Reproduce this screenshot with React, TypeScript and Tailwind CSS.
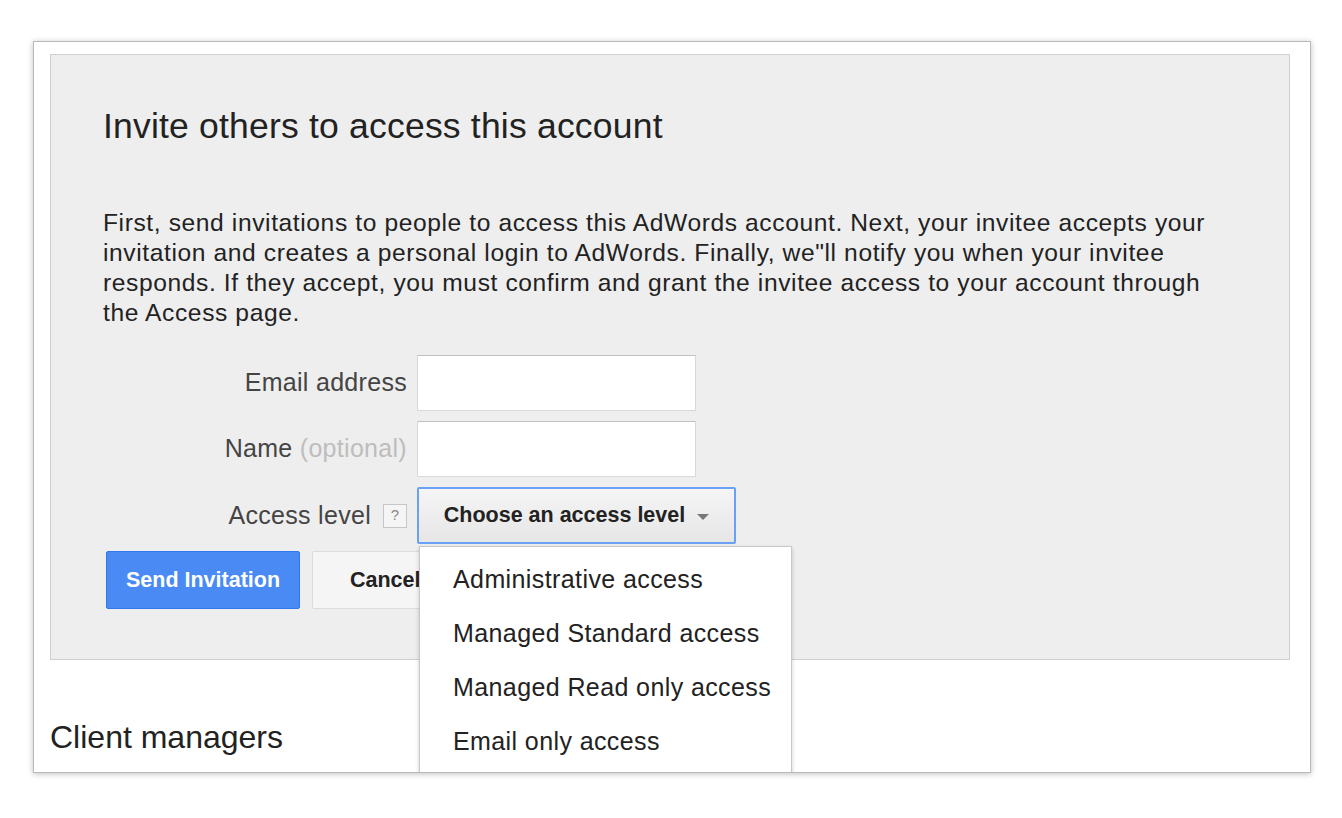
import React from 'react';

const font = { fontFamily: '"Liberation Sans", Arial, sans-serif' };

const options = [
  'Administrative access',
  'Managed Standard access',
  'Managed Read only access',
  'Email only access',
];

export default function App() {
  return (
    <div className="w-[1342px] h-[818px] bg-white pt-[41px] pl-[33px]" style={font}>
      <div className="relative w-[1278px] h-[732px] border border-[#b9b9b9] bg-white shadow-[0_1px_6px_rgba(0,0,0,0.25)] overflow-hidden text-[#222]">
        <div className="ml-[16px] mt-[12px] w-[1240px] h-[606px] border border-[#cfcfcf] bg-[#eeeeee] pl-[52px] pt-[51px]">
          <h1 className="text-[35.5px] leading-[40px] tracking-[0.2px] text-[#222]">Invite others to access this account</h1>

          <p className="mt-[62px] w-[1112px] text-[24.6px] leading-[30px] tracking-[0.6px] text-[#222]">
            First, send invitations to people to access this AdWords account. Next, your invitee accepts your invitation and creates a personal login to AdWords. Finally, we"ll notify you when your invitee responds. If they accept, you must confirm and grant the invitee access to your account through the Access page.
          </p>

          <div className="mt-[27px] grid grid-cols-[304px_auto] gap-x-[10px] gap-y-[10px] items-center">
            <label className="text-right text-[25px] tracking-[0.3px] text-[#444]">Email address</label>
            <input className="w-[279px] h-[56px] bg-white border border-[#d9d9d9] border-t-[#c0c0c0]" />

            <label className="text-right text-[25px] tracking-[0.3px] text-[#444]">
              Name <span className="text-[#bdbdbd]">(optional)</span>
            </label>
            <input className="w-[279px] h-[56px] bg-white border border-[#d9d9d9] border-t-[#c0c0c0]" />

            <div className="flex items-center justify-end gap-[12px] text-[25px] tracking-[0.3px] text-[#444]">
              <span>Access level</span>
              <span className="flex items-center justify-center w-[24px] h-[24px] border border-[#c6c6c6] bg-[#f5f5f5] text-[15px] text-[#888]">?</span>
            </div>
            <div className="relative">
              <button className="flex items-center justify-center gap-[12px] w-[319px] h-[57px] rounded-[2px] border-2 border-[#6aa0f5] bg-gradient-to-b from-[#f5f5f5] to-[#e6e6e6] text-[21.5px] font-bold text-[#222]">
                Choose an access level
                <span className="w-0 h-0 border-l-[6px] border-r-[6px] border-t-[6px] border-l-transparent border-r-transparent border-t-[#777] mt-[2px]" />
              </button>
            </div>
          </div>

          <div className="mt-[7px] ml-[3px] flex gap-[12px]">
            <button className="w-[194px] h-[58px] rounded-[2px] border border-[#3079ed] bg-[#4a8af4] text-white text-[21.5px] font-bold">
              Send Invitation
            </button>
            <button className="w-[150px] h-[58px] rounded-[2px] border border-[#dcdcdc] bg-[#f5f5f5] text-[#222] text-[21.5px] font-bold text-left pl-[37px]">
              Cancel
            </button>
          </div>
        </div>

        <h2 className="mt-[59px] ml-[16px] text-[32px] leading-[36px] text-[#222]">Client managers</h2>

        <ul className="absolute left-[385px] top-[504px] w-[373px] h-[260px] bg-white border border-[#c8c8c8] shadow-[0_2px_4px_rgba(0,0,0,0.2)] pt-[6px]">
          {options.map((o) => (
            <li key={o} className="h-[54px] pl-[33px] flex items-center text-[25px] tracking-[0.4px] text-[#222]">
              {o}
            </li>
          ))}
        </ul>
      </div>
    </div>
  );
}
